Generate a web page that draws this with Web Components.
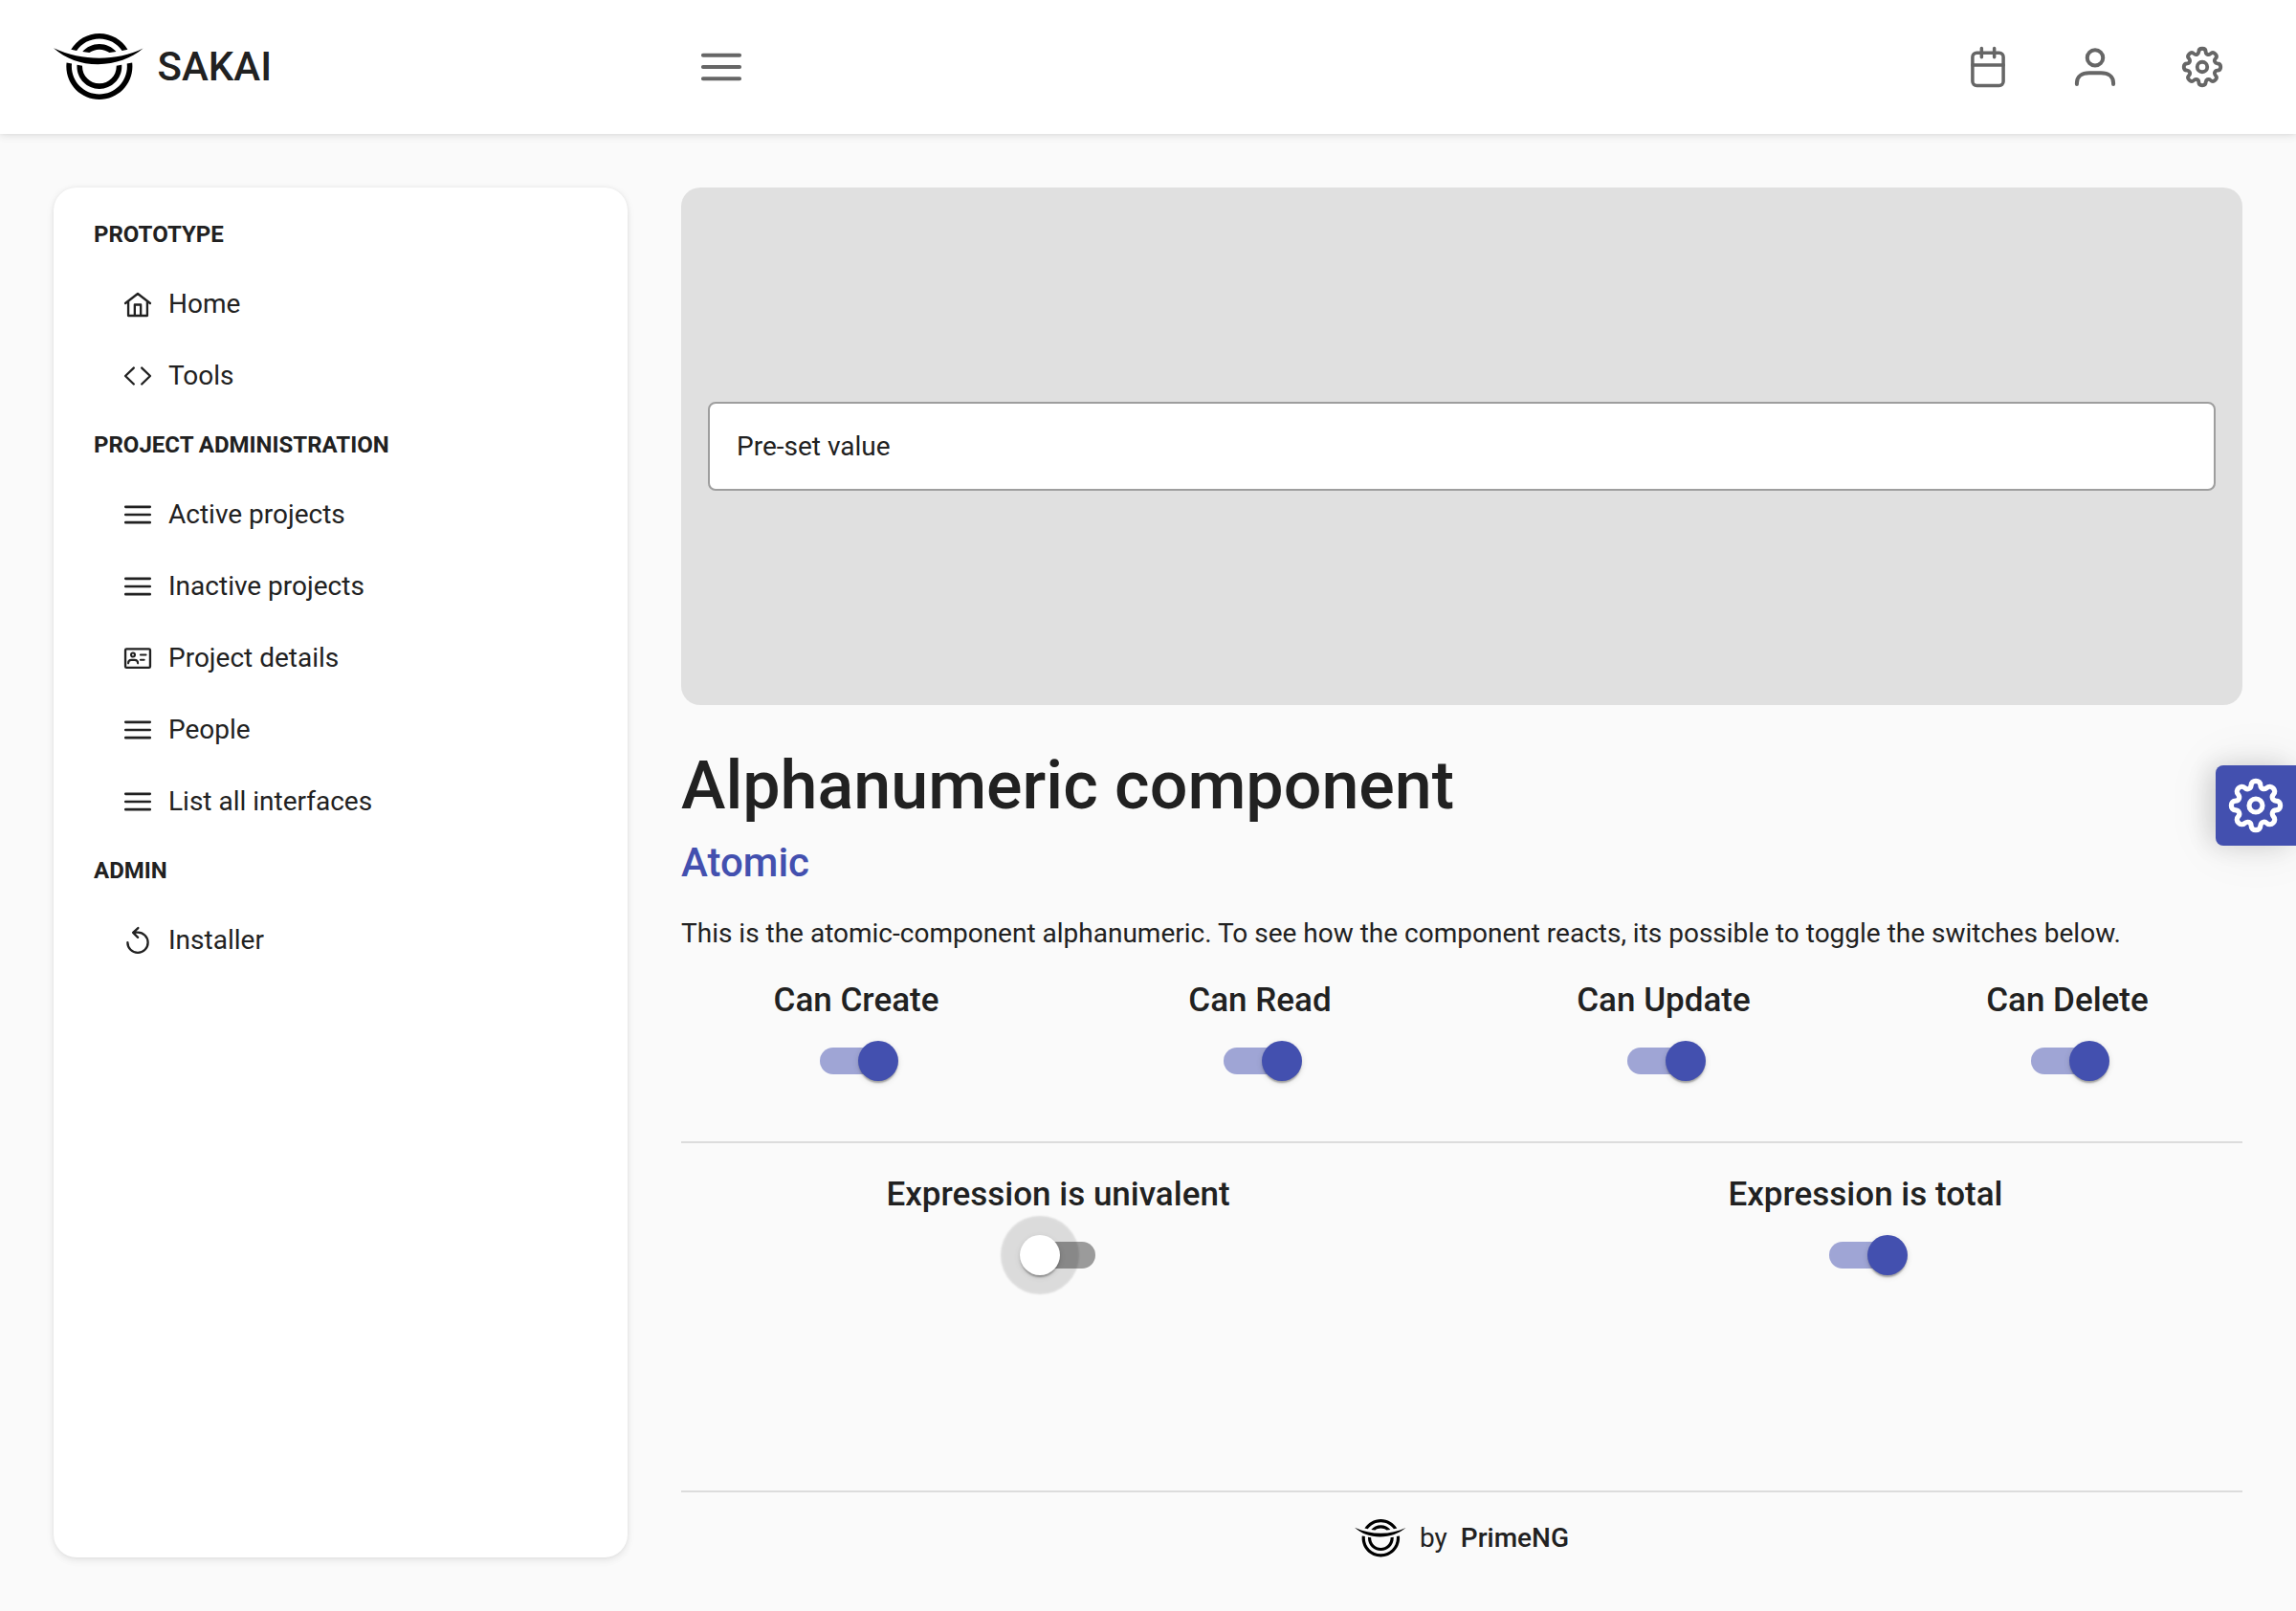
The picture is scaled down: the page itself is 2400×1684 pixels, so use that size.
<!DOCTYPE html>
<html lang="en">
<head>
<meta charset="utf-8">
<title>SAKAI</title>
<style>
  html { font-family: Roboto, "Liberation Sans", sans-serif; font-size: 28px; line-height: 42px;
    --primary: #4350af; --text: #212121; --text-soft: #666666; --surface: #ffffff; --ground: #fafafa;
    --border: #dcdcdc;
    --card-shadow: 0 6px 10px rgba(0,0,0,.02), 0 0 4px rgba(0,0,0,.05), 0 2px 8px rgba(0,0,0,.08); }
  body { margin: 0; background: var(--ground); color: var(--text); }
</style>
</head>
<body>
<sakai-app></sakai-app>
<script>
function define(name, markup, setup) {
  const template = document.createElement('template');
  template.innerHTML = markup;
  customElements.define(name, class extends HTMLElement {
    connectedCallback() {
      if (this.shadowRoot) return;
      const root = this.attachShadow({ mode: 'open' });
      root.append(template.content.cloneNode(true));
      if (setup) setup(this, root);
    }
  });
}

/* Eight-lobed gear outline: one lobe, repeated every 45 degrees. */
function gearPath() {
  const lobe = [[1.2,-11],[2.1,-10.3],[2.1,-9], [2.1,-8],[2.35,-7.8],[3.1,-7.5]];
  const back = [[3.85,-7.2],[4.2,-7.35],[4.88,-7.85], [5.8,-8.77],[6.93,-8.63],[7.78,-7.78]];
  const half = [...lobe, ...back];
  let d = 'M12 1';
  for (let i = 0; i < 8; i++) {
    const a = i * Math.PI / 4, c = Math.cos(a), s = Math.sin(a);
    half.forEach(([x, y], n) => {
      d += (n % 3 ? ' ' : 'C') + (12 + x * c - y * s).toFixed(2) + ' ' + (12 + x * s + y * c).toFixed(2);
    });
  }
  return d + 'Z';
}

const ICONS = {
  bars: '<path stroke-width="2.3" d="M1.1 5h21.8M1.1 12h21.8M1.1 19h21.8"/>',
  home: '<path d="M.9 11.1 12 2.6l11.1 8.5M3.5 9.5v12.8h17V9.5M9.3 22.2v-9.8h5.4v9.8"/>',
  code: '<path d="M8.4 4.8.9 12l7.5 7.3M15.6 4.8l7.5 7.2-7.5 7.3"/>',
  card: '<rect x=".9" y="3.7" width="22.2" height="16.8" rx="1.1"/><g stroke-width="1.8"><circle cx="7.7" cy="9" r="1.7"/><path d="M3.5 16.6c0-2.1 1.1-3 2.7-3h3c1.6 0 2.9.9 2.9 3M14.5 9h4.8M14.5 13.5h3.2"/></g>',
  undo: '<path d="M2.9 13.9A9.1 9.1 0 1 0 12 4.8H8.2M12.3.9 7.8 5l4.3 4.3"/>',
  calendar: '<rect x="2.8" y="3.5" width="18.4" height="19.6" rx="2.5"/><path d="M2.8 10.9h18.4M8.2.9v5.2M15.8.9v5.2"/>',
  user: '<g stroke-width="2.3"><circle cx="12" cy="6.5" r="4.7"/><path d="M1.1 22.3v-.7c0-3.9 2.9-6 7.4-6h7c4.5 0 7.4 2.1 7.4 6v.7"/></g>',
  cog: '<g stroke-width="2.2"><circle cx="12" cy="12" r="3"/><path d="' + gearPath() + '"/></g>'
};

define('app-icon', `
  <style>
    :host { display: block; width: 28px; height: 28px; flex: none; }
    svg { display: block; width: 100%; height: 100%; overflow: visible; fill: none; stroke: currentColor;
      stroke-width: 2; stroke-linecap: round; stroke-linejoin: round; }
  </style>
  <svg viewBox="0 0 24 24" aria-hidden="true"></svg>`,
  (el, root) => { root.querySelector('svg').innerHTML = ICONS[el.getAttribute('name')]; });

define('app-logo', `
  <style>
    :host { display: block; flex: none; height: 70px; }
    svg { display: block; height: 100%; width: auto; aspect-ratio: 54 / 40; }
  </style>
  <svg viewBox="0 0 54 40" fill="#000" aria-hidden="true">
    <path fill-rule="evenodd" clip-rule="evenodd" d="M17.16 19.25C17.157 19.4 17.153 19.56 17.153 19.72C17.153 25.35 21.72 29.915 27.355 29.915C32.989 29.915 37.556 25.35 37.556 19.72C37.556 19.557 37.552 19.396 37.545 19.236C38.562 19.08 39.576 18.9 40.587 18.7L40.693 18.678C40.719 19.022 40.733 19.369 40.733 19.72C40.733 27.104 34.743 33.09 27.355 33.09C19.966 33.09 13.977 27.104 13.977 19.72C13.977 19.374 13.99 19.032 14.015 18.693L14.049 18.7C15.084 18.906 16.122 19.089 17.164 19.247ZM33.328 11.454C31.649 10.24 29.586 9.524 27.355 9.524C25.12 9.524 23.052 10.242 21.372 11.46C20.008 11.323 18.648 11.139 17.293 10.907C19.745 8.113 23.344 6.349 27.355 6.349C31.36 6.349 34.954 8.108 37.406 10.896C36.052 11.129 34.692 11.315 33.328 11.454ZM43.826 18.052C43.881 18.6 43.909 19.157 43.909 19.72C43.909 28.857 36.497 36.264 27.355 36.264C18.212 36.264 10.8 28.857 10.8 19.72C10.8 19.162 10.828 18.61 10.882 18.066L7.754 17.441C7.668 18.189 7.624 18.949 7.624 19.72C7.624 30.61 16.457 39.439 27.355 39.439C38.252 39.439 47.086 30.61 47.086 19.72C47.086 18.944 47.041 18.179 46.954 17.427L43.826 18.052ZM44.261 9.547L40.908 10.218C37.913 5.958 32.959 3.175 27.355 3.175C21.744 3.175 16.786 5.964 13.792 10.231L10.44 9.561C13.892 3.832 20.176 0 27.355 0C34.528 0 40.808 3.826 44.261 9.547Z"/>
    <path d="M0 8.7C9 12.8 18 14.7 27.3 14.7S45.5 12.8 53.5 8.9C46.5 14.8 37 18.4 26.5 18.4S7.5 15.2 0 8.7Z"/>
  </svg>`);

define('app-icon-button', `
  <style>
    :host { display: block; }
    button { display: flex; align-items: center; justify-content: center; width: 84px; height: 84px;
      margin: 0; padding: 0; border: 0; border-radius: 50%; background: none; color: var(--text-soft); cursor: pointer; }
    app-icon { width: 42px; height: 42px; }
  </style>
  <button type="button"></button>`,
  (el, root) => {
    const button = root.querySelector('button');
    button.setAttribute('aria-label', el.getAttribute('label'));
    button.innerHTML = '<app-icon name="' + el.getAttribute('icon') + '"></app-icon>';
  });

define('app-topbar', `
  <style>
    :host { display: flex; align-items: center; height: 140px; box-sizing: border-box; padding: 0 56px;
      background: var(--surface); box-shadow: var(--card-shadow); }
    .brand { display: flex; align-items: center; gap: 14px; width: 600px; margin-right: 56px;
      font-size: 42px; line-height: 50px; font-weight: 500; color: var(--text); text-decoration: none; }
    nav { display: flex; gap: 28px; margin-left: auto; }
  </style>
  <a class="brand" href="#"><app-logo></app-logo><span>SAKAI</span></a>
  <app-icon-button icon="bars" label="Toggle menu"></app-icon-button>
  <nav>
    <app-icon-button icon="calendar" label="Calendar"></app-icon-button>
    <app-icon-button icon="user" label="Profile"></app-icon-button>
    <app-icon-button icon="cog" label="Settings"></app-icon-button>
  </nav>`);

define('app-menu-group', `
  <style>
    :host { display: block; }
    h2 { margin: 0; padding: 21px 0; font-size: 24px; line-height: 28px; font-weight: 700; text-transform: uppercase; }
  </style>
  <h2></h2>
  <slot></slot>`,
  (el, root) => { root.querySelector('h2').textContent = el.getAttribute('heading'); });

define('app-menu-item', `
  <style>
    :host { display: block; }
    a { display: flex; align-items: center; gap: 18px; padding: 21px 32px; line-height: 33px;
      color: var(--text); text-decoration: none; }
  </style>
  <a href="#"><app-icon></app-icon><span><slot></slot></span></a>`,
  (el, root) => {
    const icon = document.createElement('app-icon');
    icon.setAttribute('name', el.getAttribute('icon'));
    root.querySelector('app-icon').replaceWith(icon);
  });

define('app-sidebar', `
  <style>
    :host { display: block; box-sizing: border-box; width: 600px; flex: none; padding: 14px 42px;
      background: var(--surface); border-radius: 24px; box-shadow: var(--card-shadow); }
  </style>
  <nav>
    <app-menu-group heading="Prototype">
      <app-menu-item icon="home">Home</app-menu-item>
      <app-menu-item icon="code">Tools</app-menu-item>
    </app-menu-group>
    <app-menu-group heading="Project administration">
      <app-menu-item icon="bars">Active projects</app-menu-item>
      <app-menu-item icon="bars">Inactive projects</app-menu-item>
      <app-menu-item icon="card">Project details</app-menu-item>
      <app-menu-item icon="bars">People</app-menu-item>
      <app-menu-item icon="bars">List all interfaces</app-menu-item>
    </app-menu-group>
    <app-menu-group heading="Admin">
      <app-menu-item icon="undo">Installer</app-menu-item>
    </app-menu-group>
  </nav>`);

define('app-preview', `
  <style>
    :host { display: block; padding: 224px 28px; background: #e0e0e0; border-radius: 20px; }
    input { display: block; box-sizing: border-box; width: 100%; margin: 0; padding: 28px; border: 2px solid #9e9e9e;
      border-radius: 8px; background: var(--surface); color: var(--text); font: inherit; line-height: 33px; height: 93px; }
  </style>
  <input type="text" value="Pre-set value" aria-label="Alphanumeric value">`);

define('app-switch', `
  <style>
    :host { display: flex; flex: 1; flex-direction: column; align-items: center; gap: 28px; }
    label { font-size: 35px; line-height: 42px; font-weight: 500; }
    input { appearance: none; display: block; width: 77px; height: 28px; margin: 0; border-radius: 14px;
      background: rgba(0,0,0,.38); outline: none; cursor: pointer; }
    input::before { content: ""; display: block; width: 42px; height: 42px; border-radius: 50%;
      background: var(--surface); transform: translate(-2px, -7px);
      box-shadow: 0 4px 2px -2px rgba(0,0,0,.2), 0 2px 2px rgba(0,0,0,.14), 0 2px 6px rgba(0,0,0,.12); }
    input:checked { background: #9fa5d5; }
    input:checked::before { background: var(--primary); transform: translate(40px, -7px); }
    :host([active]) input::before { box-shadow: 0 0 2px 20px rgba(0,0,0,.12), 0 4px 2px -2px rgba(0,0,0,.2),
      0 2px 2px rgba(0,0,0,.14), 0 2px 6px rgba(0,0,0,.12); }
  </style>
  <label for="toggle"><slot></slot></label>
  <input id="toggle" type="checkbox" role="switch">`,
  (el, root) => { root.querySelector('input').checked = el.hasAttribute('checked'); });

define('app-footer', `
  <style>
    :host { display: flex; align-items: center; justify-content: center; gap: 14px; margin-top: auto;
      padding-top: 28px; border-top: 2px solid var(--border); line-height: 40px; }
    app-logo { height: 40px; }
    strong { font-weight: 500; }
  </style>
  <app-logo></app-logo><span>by</span><strong>PrimeNG</strong>`);

define('app-config-button', `
  <style>
    :host { position: fixed; right: 0; top: 50%; transform: translateY(-50%); }
    button { display: flex; align-items: center; justify-content: center; width: 84px; height: 84px; margin: 0; padding: 0;
      border: 0; border-radius: 8px 0 0 8px; background: var(--primary); color: #fff; cursor: pointer;
      box-shadow: -7px 0 28px rgba(0,0,0,.15), 0 0 56px rgba(0,0,0,.08); }
    app-icon { width: 56px; height: 56px; }
  </style>
  <button type="button" aria-label="Theme settings"><app-icon name="cog"></app-icon></button>`);

define('app-main', `
  <style>
    :host { display: flex; flex-direction: column; flex: 1; min-width: 0; }
    h1 { margin: 42px 0 14px; font-size: 70px; line-height: 84px; font-weight: 500; }
    h2 { margin: 0 0 28px; font-size: 42px; line-height: 50px; font-weight: 500; color: var(--primary); }
    p { margin: 0 0 28px; }
    .row { display: flex; margin: 0 -28px; }
    hr { width: 100%; height: 2px; margin: 70px 0 33px; border: 0; background: var(--border); }
  </style>
  <app-preview></app-preview>
  <h1>Alphanumeric component</h1>
  <h2>Atomic</h2>
  <p>This is the atomic-component alphanumeric. To see how the component reacts, its possible to toggle the switches below.</p>
  <div class="row">
    <app-switch checked>Can Create</app-switch>
    <app-switch checked>Can Read</app-switch>
    <app-switch checked>Can Update</app-switch>
    <app-switch checked>Can Delete</app-switch>
  </div>
  <hr>
  <div class="row">
    <app-switch active>Expression is univalent</app-switch>
    <app-switch checked>Expression is total</app-switch>
  </div>
  <app-footer></app-footer>`);

define('sakai-app', `
  <style>
    :host { display: flex; flex-direction: column; min-height: 100vh; }
    .body { display: flex; flex: 1; gap: 56px; padding: 56px; }
  </style>
  <app-topbar></app-topbar>
  <div class="body">
    <app-sidebar></app-sidebar>
    <app-main></app-main>
  </div>
  <app-config-button></app-config-button>`);
</script>
</body>
</html>
